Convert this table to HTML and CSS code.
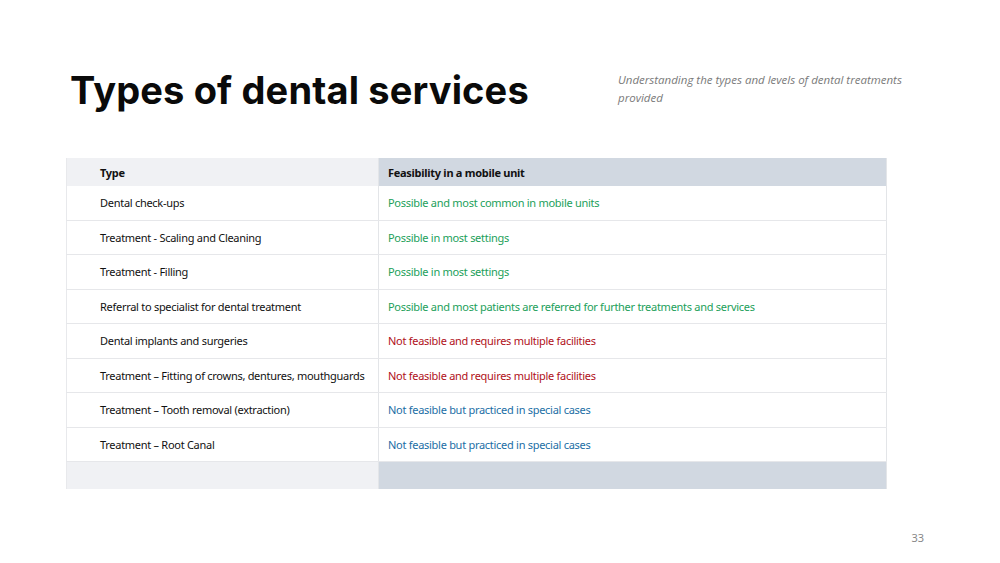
FILE: index.html
```html
<!DOCTYPE html>
<html lang="en">
<head>
<meta charset="utf-8">
<title>Types of dental services</title>
<link rel="stylesheet" href="styles.css">
</head>
<body>
<div class="slide">
  <header class="head">
    <h1 class="title">Types of dental services</h1>
    <p class="subtitle">Understanding the types and levels of dental treatments provided</p>
  </header>
  <table class="grid">
    <colgroup><col class="w1"><col class="w2"></colgroup>
    <thead>
      <tr><th class="c1">Type</th><th class="c2">Feasibility in a mobile unit</th></tr>
    </thead>
    <tbody>
      <tr><td class="c1">Dental check-ups</td><td class="c2 ok">Possible and most common in mobile units</td></tr>
      <tr><td class="c1">Treatment - Scaling and Cleaning</td><td class="c2 ok">Possible in most settings</td></tr>
      <tr><td class="c1">Treatment - Filling</td><td class="c2 ok">Possible in most settings</td></tr>
      <tr><td class="c1">Referral to specialist for dental treatment</td><td class="c2 ok">Possible and most patients are referred for further treatments and services</td></tr>
      <tr><td class="c1">Dental implants and surgeries</td><td class="c2 no">Not feasible and requires multiple facilities</td></tr>
      <tr><td class="c1">Treatment – Fitting of crowns, dentures, mouthguards</td><td class="c2 no">Not feasible and requires multiple facilities</td></tr>
      <tr><td class="c1">Treatment – Tooth removal (extraction)</td><td class="c2 sp">Not feasible but practiced in special cases</td></tr>
      <tr><td class="c1">Treatment – Root Canal</td><td class="c2 sp">Not feasible but practiced in special cases</td></tr>
    </tbody>
    <tfoot>
      <tr><td class="c1"></td><td class="c2"></td></tr>
    </tfoot>
  </table>
  <div class="page">33</div>
</div>
</body>
</html>
```
FILE: styles.css
```css
html, body {
  margin: 0;
  padding: 0;
  background: #ffffff;
}
.slide {
  width: 1000px;
  height: 563px;
  position: relative;
  box-sizing: border-box;
  padding: 62px 0 0 66px;
  font-family: "Noto Sans", "Open Sans", sans-serif;
}
.head {
  display: flex;
  align-items: flex-start;
}
.title {
  margin: 0 0 0 4px;
  width: 548px;
  font-family: "Inter", "Lato", sans-serif;
  font-weight: 700;
  font-size: 38px;
  letter-spacing: 0.15px;
  line-height: 56px;
  color: #0a0a0a;
}
.subtitle {
  margin: 9px 0 0 0;
  width: 300px;
  font-family: "Open Sans", sans-serif;
  font-style: italic;
  font-size: 11.5px;
  line-height: 18px;
  color: #7a7a7a;
}
.grid {
  margin-top: 40px;
  width: 820px;
  table-layout: fixed;
  border-collapse: collapse;
  font-size: 11px;
  letter-spacing: -0.28px;
  color: #111;
}
.w1 { width: 312px; }
.w2 { width: 508px; }
.grid th, .grid td {
  text-align: left;
  padding: 0;
  white-space: nowrap;
}
.grid .c1 {
  padding-left: 33px;
  border-left: 1px solid #e8e9ec;
}
.grid .c2 {
  padding-left: 9px;
  border-left: 1px solid #e3e5e8;
  border-right: 1px solid #e3e5e8;
}
.grid thead th {
  height: 28px;
  font-weight: 700;
}
.grid thead .c1 { background: #f0f1f4; }
.grid thead .c2 { background: #d1d8e1; }
.grid tbody td {
  height: 33.5px;
  border-bottom: 1px solid #e6e7ea;
}
.grid tfoot td { height: 27px; }
.grid tfoot .c1 { background: #f0f1f4; }
.grid tfoot .c2 { background: #d1d8e1; }
.ok { color: #22a05a; }
.no { color: #b01020; }
.sp { color: #1b6ea5; }
.page {
  position: absolute;
  right: 76px;
  top: 530px;
  font-size: 11px;
  color: #888;
}
```
